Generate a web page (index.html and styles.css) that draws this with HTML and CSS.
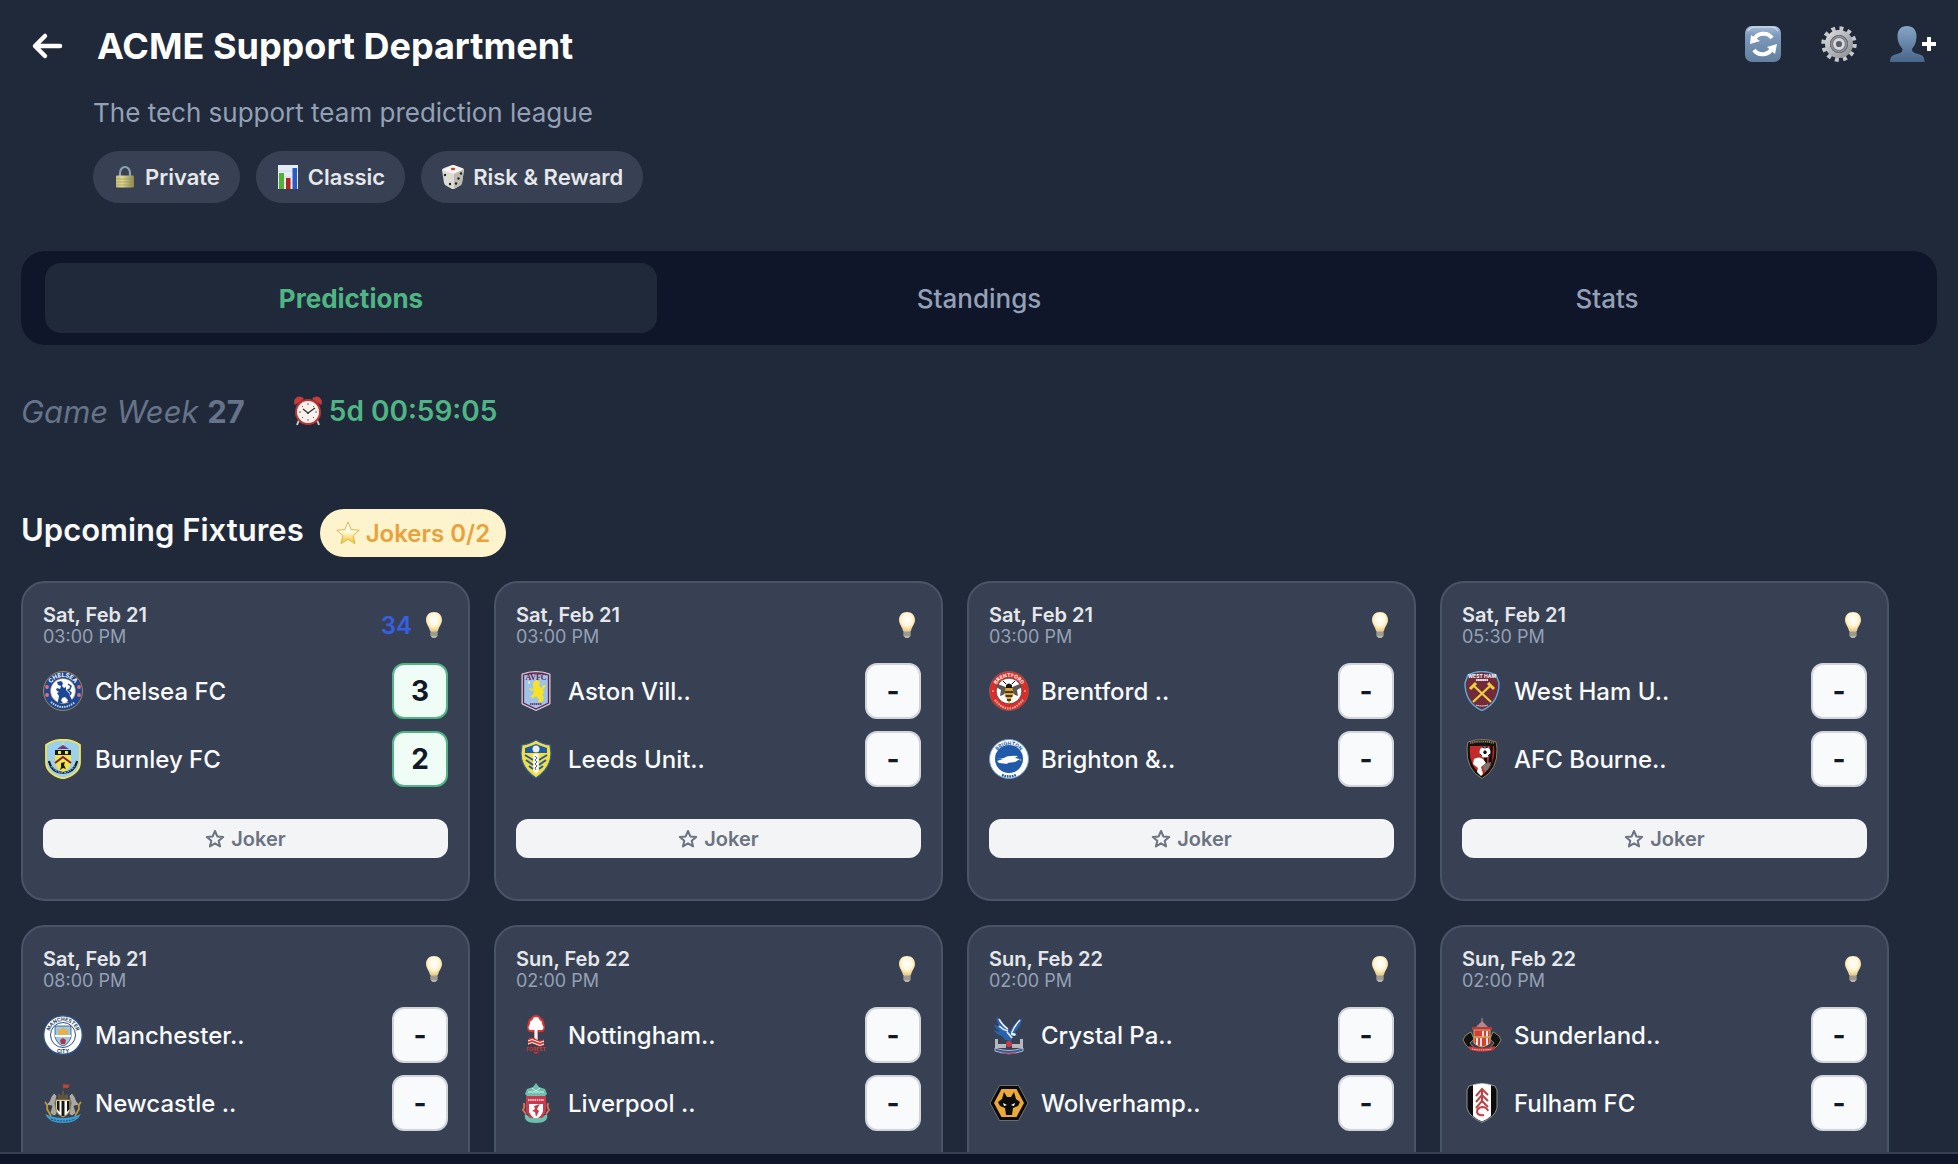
FILE: index.html
```html
<!DOCTYPE html>
<html lang="en">
<head>
    <meta charset="UTF-8">
    <meta name="viewport" content="width=device-width, initial-scale=1.0">
    <title>ACME Support Department</title>
    <link rel="stylesheet" href="styles.css">
</head>
<body>
    <!-- Shared icons, gradients and lettering arcs -->
    <svg class="sprite" aria-hidden="true">
        <defs>
            <linearGradient id="g-blue" x1="0" y1="0" x2="0" y2="1"><stop offset="0" stop-color="#a9c0dc"/><stop offset=".25" stop-color="#7e9abc"/><stop offset="1" stop-color="#64809f"/></linearGradient>
            <linearGradient id="g-person" x1="0" y1="0" x2="0" y2="1"><stop offset="0" stop-color="#86a5c6"/><stop offset="1" stop-color="#48658a"/></linearGradient>
            <linearGradient id="g-steel" x1="0" y1="0" x2="1" y2="1"><stop offset="0" stop-color="#d7d9dc"/><stop offset="1" stop-color="#8e9297"/></linearGradient>
            <linearGradient id="g-brass" x1="0" y1="0" x2="1" y2="0"><stop offset="0" stop-color="#c9c07a"/><stop offset=".35" stop-color="#ddd68f"/><stop offset="1" stop-color="#8f8750"/></linearGradient>
            <linearGradient id="g-star" x1="0" y1="0" x2="0" y2="1"><stop offset="0" stop-color="#fff"/><stop offset=".45" stop-color="#fffbe0"/><stop offset="1" stop-color="#f3c11f"/></linearGradient>
            <radialGradient id="g-bulb" cx=".5" cy=".4" r=".6"><stop offset="0" stop-color="#fff"/><stop offset=".55" stop-color="#fff7da"/><stop offset="1" stop-color="#eccb7c"/></radialGradient>
            <path id="arc-top" d="M6 20a14 14 0 0 1 28 0"/>
        </defs>

        <symbol id="i-bulb" viewBox="0 0 28 28">
            <path d="M14 0c5 0 8 3.500 8 8 0 4-3 6-4 11h-8C9 14 6 12 6 8c0-4.500 3-8 8-8z" fill="url(#g-bulb)"/>
            <path d="M10.500 19h7v5l-2 2h-3l-2-2z" fill="#b9b6ae"/><path d="M10.500 21h7M10.500 23h7" stroke="#837f76"/>
        </symbol>
        <symbol id="i-joker" viewBox="0 0 20 20">
            <path d="m10 2 2.300 5.400 5.900.500-4.500 3.800 1.400 5.700-5.100-3.100-5.100 3.100 1.400-5.700L1.800 7.900l5.900-.500z" fill="none" stroke="currentColor" stroke-width="2" stroke-linejoin="round"/>
        </symbol>
    </svg>

    <main class="page">
        <header class="league-header">
            <button type="button" class="icon-btn back" aria-label="Back">
                <svg width="32" height="32" viewBox="0 0 32 32"><path d="M14 6 4 16l10 10M4.500 16H29" fill="none" stroke="#fff" stroke-width="4.500" stroke-linecap="round" stroke-linejoin="round"/></svg>
            </button>
            <h1>ACME Support Department</h1>
            <div class="actions">
                <button type="button" class="icon-btn" aria-label="Refresh">
                    <svg width="40" height="36" viewBox="0 0 40 36">
                        <rect width="36" height="36" rx="7" fill="url(#g-blue)"/><path d="M3 5q2-4 7-4h16q5 0 7 4" fill="none" stroke="#d3e0ee" stroke-width="1.200"/>
                        <path d="M9 14a10 9 0 0 1 18-2M27 22a10 9 0 0 1-18 2" fill="none" stroke="#fff" stroke-width="4"/><path d="m5 18 1-9 9 6zM32 18l-10 3 8 7z" fill="#fff"/>
                    </svg>
                </button>
                <button type="button" class="icon-btn" aria-label="Settings">
                    <svg width="40" height="36" viewBox="0 0 40 36">
                        <circle cx="22" cy="18" r="15.500" fill="none" stroke="#c5c7ca" stroke-width="4.500" stroke-dasharray="3.900 4.216"/>
                        <circle cx="22" cy="18" r="11.500" fill="none" stroke="url(#g-steel)" stroke-width="5"/><circle cx="22" cy="18" r="9" fill="#777a80"/><circle cx="22" cy="18" r="7.500" fill="none" stroke="#94979c"/>
                        <circle cx="22" cy="18" r="4.500" fill="#5b5e66" stroke="#d7d8da" stroke-width="2.800"/>
                    </svg>
                </button>
                <button type="button" class="icon-btn" aria-label="Invite member">
                    <svg width="48" height="36" viewBox="0 0 48 36">
                        <path d="M18 0c6 0 9.500 4 9.500 10 0 6-2 10-4.500 13 0 3 2 4 6 5 5 1 6.500 3 6.500 8H1c0-5 2-7 7-8 4-1 5.500-2 5.500-5C11 20 8.500 16 8.500 10 8.500 4 12 0 18 0z" fill="url(#g-person)"/>
                        <path d="M40 11v14M33 18h14" stroke="#fff" stroke-width="4"/>
                    </svg>
                </button>
            </div>
        </header>
        <div class="league-info">
            <p>The tech support team prediction league</p>
            <div class="chips">
                <span class="chip">
                    <svg class="chip-icon" viewBox="0 0 24 24">
                        <path d="M7 12V8a5 6 0 0 1 10 0v4" fill="none" stroke="#8c9fb4" stroke-width="2.200"/>
                        <rect x="3" y="10.500" width="18" height="12" rx="1" fill="url(#g-brass)"/>
                        <path d="M3 14h18M3 17h18M3 20h18" stroke="#8f8750" stroke-width=".5"/>
                    </svg>Private
                </span>
                <span class="chip">
                    <svg class="chip-icon" viewBox="0 0 24 24">
                        <path d="M2 0h20v24H2z" fill="#e6ecf5"/>
                        <path d="M2 6h20M2 12h20M2 18h20" stroke="#c6d2e4" stroke-width=".8"/>
                        <path d="M3 8h5v16H3z" fill="#55b03a"/><path d="M10 13h4.500v11H10z" fill="#b3241c"/><path d="M16.500 3H21v21h-4.500z" fill="#2a5bc4"/>
                    </svg>Classic
                </span>
                <span class="chip">
                    <svg class="chip-icon" viewBox="0 0 24 24">
                        <path d="M1 5q0-1 2-2l8-3h2l8 3q2 1 2 2l-2 13-1 2-7 4h-2l-7-4-1-2z" fill="#dedbd4"/>
                        <path d="m1 5 11-5 11 4-10 5z" fill="#f7f5f1"/><path d="m13 9 10-5-2 14-1 2-7 4z" fill="#bdbab3"/>
                        <ellipse cx="12" cy="4" rx="2.200" ry="1.200" fill="#d8382c"/>
                        <g fill="#26221f"><circle cx="4" cy="10" r="1.200"/><circle cx="9" cy="19" r="1.200"/><circle cx="20" cy="8.500" r="1.200"/><circle cx="17.500" cy="13.500" r="1.200"/><circle cx="15" cy="18.500" r="1.200"/></g>
                    </svg>Risk &amp; Reward
                </span>
            </div>
        </div>

        <nav class="tabs">
            <button type="button" class="tab active">Predictions</button>
            <button type="button" class="tab">Standings</button>
            <button type="button" class="tab">Stats</button>
        </nav>

        <div class="game-week">
            <div class="week"><em>Game Week</em> <strong>27</strong></div>
            <div class="countdown">
                <svg class="clock" viewBox="0 0 30 30">
                    <path d="m6 24-2 5M24 24l2 5" stroke="#c9c9cd" stroke-width="2"/>
                    <path d="M2 9a5 5 0 0 1 9-6zM28 9a5 5 0 0 0-9-6z" fill="#c63c3c"/>
                    <circle cx="15" cy="16" r="13" fill="#bd3535"/><circle cx="15" cy="16" r="11" fill="#f6f3ee"/>
                    <path d="M15 7v2M15 23v2M6 16h2M22 16h2M9 10l1 1M21 10l-1 1M9 22l1-1M21 22l-1-1" stroke="#c63c3c"/>
                    <path d="m10 13 5 4 7-5" fill="none" stroke="#333" stroke-width="1.300"/><circle cx="15" cy="17" r="1" fill="#333"/>
                </svg>5d 00:59:05
            </div>
        </div>

        <div class="section-title">
            <h2>Upcoming Fixtures</h2>
            <span class="jokers">
                <svg class="star" viewBox="0 0 24 24"><path d="m12 1 3.200 7.600 8.100.700-6.200 5.300 1.900 8L12 18.300 5 22.600l1.900-8L.700 9.300l8.100-.700z" fill="url(#g-star)" stroke="#dfb64a" stroke-width="1" stroke-linejoin="round"/></svg>Jokers 0/2
            </span>
        </div>

        <section class="fixtures">
            <article class="card">
                <div class="card-head">
                    <div><div class="date">Sat, Feb 21</div><div class="time">03:00 PM</div></div>
                    <div class="hint"><span class="points">34</span><svg class="bulb"><use href="#i-bulb"/></svg></div>
                </div>
                <div class="team">
                    <svg class="crest" viewBox="0 0 40 40">
                        <circle cx="20" cy="20" r="19.500" fill="#1d4795" stroke="#a08a4c"/>
                        <circle cx="20" cy="20" r="12.500" fill="#fff" stroke="#a08a4c" stroke-width=".6"/>
                        <g fill="#ee6a78"><circle cx="4" cy="16" r="1.900"/><circle cx="4" cy="24" r="1.900"/><circle cx="36" cy="16" r="1.900"/><circle cx="36" cy="24" r="1.900"/></g>
                        <path d="m14 11 4-1 2 2-1 3 2 2 2-1v3l3 3 1 3 2 4-1 2h-4l1-2-3-3-3 1-1 3 2 1-1 1h-4v-2l1-5-2-3 2-1-3-2 1-2 3 1 1-3-3-1z" fill="#1d4795"/>
                        <path d="M25 13l3 2-1 3-2 1 3 3-1 2" fill="none" stroke="#1d4795" stroke-width="1.500"/>
                        <text class="crest-text" fill="#fff"><textPath href="#arc-top" startOffset="50%">CHELSEA</textPath></text>
                        <path d="M8 31q12 10 24 0" fill="none" stroke="#dfe6f2" stroke-width="1.800" stroke-dasharray="1.400 1"/>
                    </svg>
                    <label for="s1">Chelsea FC</label><input class="score filled" id="s1" type="text" value="3">
                </div>
                <div class="team">
                    <svg class="crest" viewBox="0 0 40 40">
                        <path d="M3 6Q12 0 20 1 28 0 37 6v17q0 12-17 16.500Q3 35 3 23z" fill="#9cd0ee" stroke="#efe455" stroke-width="1.800"/>
                        <path d="M12 11h16v11q0 8-8 11-8-3-8-11z" fill="#f1e548"/>
                        <path d="M12 11h16v5H12z" fill="#17181a"/><path d="M15 12h3v3h-3zM22 12h3v3h-3z" fill="#f1e548"/>
                        <path d="m12 24 8-6 8 6" fill="none" stroke="#7d1f3e" stroke-width="2"/>
                        <path d="M14 10h12l-3-2-3-2-3 2z" fill="#6c3d7c"/><path d="m20 2 1 4h-2z" fill="#efe455"/>
                        <path d="m18 24 4-1-1 3 2 4-3-1-3 2 1-3z" fill="#17181a"/>
                        <path d="M6 22q2 11 14 12 12-1 14-12" fill="none" stroke="#17181a" stroke-width="2.200"/><path d="M8 27q4 6 12 7 8-1 12-7" fill="none" stroke="#9cd0ee" stroke-dasharray="2 1"/>
                    </svg>
                    <label for="s2">Burnley FC</label><input class="score filled" id="s2" type="text" value="2">
                </div>
                <button type="button" class="joker"><svg class="joker-star"><use href="#i-joker"/></svg>Joker</button>
            </article>

            <article class="card">
                <div class="card-head">
                    <div><div class="date">Sat, Feb 21</div><div class="time">03:00 PM</div></div>
                    <div class="hint"><svg class="bulb"><use href="#i-bulb"/></svg></div>
                </div>
                <div class="team">
                    <svg class="crest" viewBox="0 0 40 40">
                        <path d="M6 3q14-5 28 0v30q-6 3-14 6.500Q12 36 6 33z" fill="#9fc3e8" stroke="#d9ccd9"/>
                        <path d="M7.500 4q12.500-4 25 0v28q-6 3-12.500 6-6.500-3-12.500-6z" fill="none" stroke="#6c1f45" stroke-width="1.300"/>
                        <text class="crest-text serif" x="20" y="9" fill="#6c1f45">AVFC</text>
                        <path d="m17 11 4-2 3 2-1 4 2 2 3-3 2 1-3 3 1 4-2 1 2 4-2 4h-4l1-3-3-3-3 2-3-1 3-3 1-3-4-1-1-2 5 1-1-3z" fill="#f7e224"/>
                        <circle cx="13" cy="11.500" r="1" fill="#fff"/><path d="M14 33h12" stroke="#6c1f45" stroke-width="1.600" stroke-dasharray="1.500 .5"/>
                    </svg>
                    <label for="s3">Aston Vill..</label><input class="score" id="s3" type="text" value="-">
                </div>
                <div class="team">
                    <svg class="crest" viewBox="0 0 40 40">
                        <path d="M20 1q6 4 14 5l1 8q0 15-15 25Q5 29 5 14l1-8q8-1 14-5z" fill="#f8de3b" stroke="#2a62a8" stroke-width="1.200"/>
                        <path d="M20 5q5 2 11 4v5H9V9q6-2 11-4z" fill="#1f5ca8"/>
                        <path d="m9 16 8 5M10 21l7 5M13 27l4 3M31 16l-8 5M30 21l-7 5M27 27l-4 3" stroke="#1f5ca8" stroke-width="2"/>
                        <circle cx="20" cy="10" r="3.500" fill="#e9eef2"/><path d="M17.500 15h5v17l-2.500 3-2.500-3z" fill="#fff"/><path d="m19 17 2 2-2 2 2 2-2 2 2 2-2 2 1 2" fill="none" stroke="#1f5ca8" stroke-width=".9"/>
                    </svg>
                    <label for="s4">Leeds Unit..</label><input class="score" id="s4" type="text" value="-">
                </div>
                <button type="button" class="joker"><svg class="joker-star"><use href="#i-joker"/></svg>Joker</button>
            </article>

            <article class="card">
                <div class="card-head">
                    <div><div class="date">Sat, Feb 21</div><div class="time">03:00 PM</div></div>
                    <div class="hint"><svg class="bulb"><use href="#i-bulb"/></svg></div>
                </div>
                <div class="team">
                    <svg class="crest" viewBox="0 0 40 40">
                        <circle cx="20" cy="20" r="19.500" fill="#dc2e28" stroke="#8b5552"/><circle cx="20" cy="20" r="12.800" fill="#fff" stroke="#222" stroke-width=".6"/>
                        <path d="m19 17-10-4-2 3 5 3-1 6 3-1 5-4zM21 17l10-4 2 3-5 3 1 6-3-1-5-4z" fill="#5c5751"/>
                        <path d="M17 14q3-3 6 0v3h-6z" fill="#191614"/><path d="M16.500 17h7l1 6-4.500 10-4.500-10z" fill="#dda63a"/><path d="M16 21h8M16.500 25h7M18 29h4" stroke="#191614" stroke-width="1.700"/><path d="m17 13-3-3M23 13l3-3" stroke="#191614"/>
                        <text class="crest-text tiny" fill="#fff"><textPath href="#arc-top" startOffset="50%">BRENTFORD</textPath></text>
                        <path d="M6 29q14 17 28 0" fill="none" stroke="#f6c3c0" stroke-width="2" stroke-dasharray="1.400 1.100"/><path d="M3 20h2M35 20h2" stroke="#f6c3c0"/>
                    </svg>
                    <label for="s5">Brentford ..</label><input class="score" id="s5" type="text" value="-">
                </div>
                <div class="team">
                    <svg class="crest" viewBox="0 0 40 40">
                        <circle cx="20" cy="20" r="19.500" fill="#fff" stroke="#6c9ed2"/><circle cx="20" cy="20" r="14" fill="#215aa9"/>
                        <path d="M1 19q10 1 14 0 4-3 14-2l-3 2 5 1-5 3-8 1 1 1-9-1-2-2 6-2-13-1z" fill="#fff"/><path d="m31 20 2 1-2 1z" fill="#e9b93b"/>
                        <text class="crest-text tiny" fill="#215aa9"><textPath href="#arc-top" startOffset="50%">BRIGHTON</textPath></text>
                        <path d="M13 36q7 3 14 0" fill="none" stroke="#215aa9" stroke-width="2.500" stroke-dasharray="1.700 .8"/>
                    </svg>
                    <label for="s6">Brighton &amp;..</label><input class="score" id="s6" type="text" value="-">
                </div>
                <button type="button" class="joker"><svg class="joker-star"><use href="#i-joker"/></svg>Joker</button>
            </article>

            <article class="card">
                <div class="card-head">
                    <div><div class="date">Sat, Feb 21</div><div class="time">05:30 PM</div></div>
                    <div class="hint"><svg class="bulb"><use href="#i-bulb"/></svg></div>
                </div>
                <div class="team">
                    <svg class="crest" viewBox="0 0 40 40">
                        <path d="M6 4q14-7 28 0l3 8q0 20-17 27.500Q3 32 3 12z" fill="#722b3a" stroke="#59a7d8" stroke-width="1.500"/>
                        <text class="crest-text tiny" x="20" y="7" fill="#fff">WEST HAM</text>
                        <path d="M14 9h12" stroke="#fff" stroke-width="2" stroke-dasharray="1.600 .5"/>
                        <path d="m11 31 18-17M29 31 11 14" stroke="#f1cf3d" stroke-width="2.200"/><path d="m8 18 6-6M26 12l6 6" stroke="#f1cf3d" stroke-width="3"/>
                        <path d="M14 34q6 2 12 0" fill="none" stroke="#fff" stroke-dasharray="1.500 .6"/>
                    </svg>
                    <label for="s7">West Ham U..</label><input class="score" id="s7" type="text" value="-">
                </div>
                <div class="team">
                    <svg class="crest" viewBox="0 0 40 40">
                        <path d="M6 3q14-5 28 0l1 6q1 22-15 30.500Q4 31 5 9z" fill="#17110f" stroke="#8a7d62"/>
                        <path d="M8 7h24q2 20-12 29Q6 27 8 7z" fill="#c42a29"/><path d="M22 7h3v25h-3zM28 7h3l-1 17-4 6z" fill="#17110f"/>
                        <path d="M8 4q12-3 24 0" fill="none" stroke="#8a7d62" stroke-width="1.800" stroke-dasharray="1.500 .6"/>
                        <circle cx="23" cy="13" r="5.500" fill="#fff"/><path d="m23 11 2 2-1 2h-2l-1-2z" fill="#17110f"/><path d="m20 8 3 1 3-1M18 15l2 2M28 15l-2 2" fill="none" stroke="#17110f"/>
                        <path d="M12 20q5-3 9 0l3 4-5 4 2 7-2 2-4-4 1-4-5-4z" fill="#fff"/><path d="m22 25 7-2q-1 6-6 10l-2-4z" fill="#7a7672"/>
                    </svg>
                    <label for="s8">AFC Bourne..</label><input class="score" id="s8" type="text" value="-">
                </div>
                <button type="button" class="joker"><svg class="joker-star"><use href="#i-joker"/></svg>Joker</button>
            </article>

            <article class="card">
                <div class="card-head">
                    <div><div class="date">Sat, Feb 21</div><div class="time">08:00 PM</div></div>
                    <div class="hint"><svg class="bulb"><use href="#i-bulb"/></svg></div>
                </div>
                <div class="team">
                    <svg class="crest" viewBox="0 0 40 40">
                        <circle cx="20" cy="20" r="19.300" fill="#fff" stroke="#2b5286" stroke-width="1.400"/><circle cx="20" cy="20" r="12.500" fill="#fff" stroke="#2b5286"/>
                        <path d="M12 11h16v11q-2 7-8 9-6-2-8-9z" fill="#9fc7e8" stroke="#2b5286" stroke-width=".8"/>
                        <path d="m15 14 2 1 3-3 3 3 2-1v6H15z" fill="#e2b34b"/><path d="M12 20h16v2H12z" fill="#fff"/><path d="m20 23 3 2-1 4h-4l-1-4z" fill="#ad3647"/>
                        <text class="crest-text tiny" fill="#2b3c62"><textPath href="#arc-top" startOffset="50%">MANCHESTER</textPath></text>
                        <text class="crest-text tiny" x="20" y="38" fill="#2b3c62">CITY</text>
                    </svg>
                    <label for="s9">Manchester..</label><input class="score" id="s9" type="text" value="-">
                </div>
                <div class="team">
                    <svg class="crest" viewBox="0 0 40 40">
                        <path d="M20 8V1l7 1-2 3h-5" fill="#c94141" stroke="#5c5148" stroke-width=".6"/><path d="M15 16v-5h2v1h2V8h2v4h2v-1h2v5z" fill="#5f5540"/>
                        <path d="M3 22q4-3 5-8l3-4 3 3-2 7 2 11-3 2-4-3 2-7zM37 22q-4-3-5-8l-3-4-3 3 2 7-2 11 3 2 4-3-2-7z" fill="#a9aaa8" stroke="#3b3a3a" stroke-width=".8"/>
                        <path d="M2 19q3 3 2 7l4 7M38 19q-3 3-2 7l-4 7" fill="none" stroke="#b89538" stroke-width="1.800"/>
                        <path d="M13 17h14v8q0 6-7 9-7-3-7-9z" fill="#fff" stroke="#b89538"/><path d="M14 18h2.500v11L14 26zM18.500 18h3v15h-3zM24 18h2.500v8L24 29z" fill="#161616"/>
                        <path d="M2 31q18 8 36 0-4 9-18 9T2 31z" fill="#3d9bd1"/><path d="M8 36q12 4 24 0" fill="none" stroke="#1f4c70" stroke-dasharray="2 1"/>
                    </svg>
                    <label for="s10">Newcastle ..</label><input class="score" id="s10" type="text" value="-">
                </div>
            </article>

            <article class="card">
                <div class="card-head">
                    <div><div class="date">Sun, Feb 22</div><div class="time">02:00 PM</div></div>
                    <div class="hint"><svg class="bulb"><use href="#i-bulb"/></svg></div>
                </div>
                <div class="team">
                    <svg class="crest" viewBox="0 0 40 40">
                        <path d="M20 0q4 0 5 3 3 1 3 5 2 4 0 8-3 2-6 1v8h-4v-8q-3 1-6-1-2-4 0-8 0-4 3-5 1-3 5-3z" fill="#d9342f"/>
                        <path d="M20 2q3 0 3.500 3 3 1 2.500 4 3 4 0 6h-4.500v10h-3V15H14q-3-2 0-6-.500-3 2.500-4Q17 2 20 2z" fill="#fff"/>
                        <path d="M12 24q4-3 8 0t8 0v6q-4 3-8 0t-8 0z" fill="#d9342f"/><path d="M12 26q4-3 8 0t8 0M12 29q4-3 8 0t8 0" fill="none" stroke="#fff"/>
                        <text class="crest-text tiny" x="20" y="36" fill="#d9342f">FOREST</text><path d="M17 37h6l-3 2z" fill="#d9342f"/>
                    </svg>
                    <label for="s11">Nottingham..</label><input class="score" id="s11" type="text" value="-">
                </div>
                <div class="team">
                    <svg class="crest" viewBox="0 0 40 40">
                        <path d="m20 0 3 4 6 2 2 5-2 2H11l-2-2 2-5 6-2z" fill="#6fbfae"/><path d="M12 9h16M16 5l4 3 4-3" fill="none" stroke="#d7eee9"/>
                        <path d="M10 13h20v15l-4 7H14l-4-7z" fill="#c93a4c"/><path d="M8 20q1 4-1 7l3 4M32 20q-1 4 1 7l-3 4" fill="none" stroke="#dc6c4c" stroke-width="2"/>
                        <path d="M13 21h14v7q-1 5-7 8-6-3-7-8z" fill="#fff"/><path d="m18 23 6-2-3 5 2 2-3 6-1-5-3-1 3-2z" fill="#c93a4c"/><path d="M12 17h16" stroke="#f4c9cd" stroke-width="2" stroke-dasharray="1.400 .8"/>
                        <path d="M9 31q3 1 5 4h12q2-3 5-4 2 9-11 9T9 31z" fill="#6fbfae"/>
                    </svg>
                    <label for="s12">Liverpool ..</label><input class="score" id="s12" type="text" value="-">
                </div>
            </article>

            <article class="card">
                <div class="card-head">
                    <div><div class="date">Sun, Feb 22</div><div class="time">02:00 PM</div></div>
                    <div class="hint"><svg class="bulb"><use href="#i-bulb"/></svg></div>
                </div>
                <div class="team">
                    <svg class="crest" viewBox="0 0 40 40">
                        <path d="M8 1q3 7 11 12l2 3q4-8 12-13-1 9-7 14l2 4-3-1-3 6-6-1-3-4q-6-1-8-6 4 2 6 1-6-3-6-7 3 3 5 2-3-5-2-10z" fill="#2a63ad"/>
                        <path d="M10 4q4 7 9 10M10 11q4 4 9 5M31 5q-5 5-8 12M18 17l5 6" fill="none" stroke="#e8eff7" stroke-width="1.600"/>
                        <path d="m22 17 5 2-1 2-4-1z" fill="#f2f4f6"/><circle cx="20" cy="29" r="3" fill="#c83b45"/>
                        <path d="M6 24h3v5h8v4H6zM34 24h-3v5h-8v4h11z" fill="#b6b8bd"/><path d="M6 33q14 5 28 0v3q-14 5-28 0z" fill="#34589b" stroke="#e3e6ee" stroke-width=".7"/><path d="M13 38q7 2 14 0" fill="none" stroke="#c83b45"/>
                    </svg>
                    <label for="s13">Crystal Pa..</label><input class="score" id="s13" type="text" value="-">
                </div>
                <div class="team">
                    <svg class="crest" viewBox="0 0 40 40">
                        <path d="M10.500 2.500h19L39 20l-9.500 17.500h-19L1 20z" fill="#0c0c0c" stroke="#8b8b8b" stroke-width=".7"/><path d="M12.500 6h15L35 20l-7.500 14h-15L5 20z" fill="#eba937"/>
                        <path d="m15 9 3 5h4l3-5 2 7 4 3-2 4-5 2-1 7h-6l-1-7-5-2-2-4 4-3z" fill="#0c0c0c"/><path d="m14 20 4 2-3 1zM26 20l-4 2 3 1z" fill="#fff"/>
                    </svg>
                    <label for="s14">Wolverhamp..</label><input class="score" id="s14" type="text" value="-">
                </div>
            </article>

            <article class="card">
                <div class="card-head">
                    <div><div class="date">Sun, Feb 22</div><div class="time">02:00 PM</div></div>
                    <div class="hint"><svg class="bulb"><use href="#i-bulb"/></svg></div>
                </div>
                <div class="team">
                    <svg class="crest" viewBox="0 0 40 40">
                        <path d="M20 3v6" stroke="#9a9dab"/><path d="m20 6 7 7H13z" fill="#b8848c"/><path d="M10 12h20v3H10z" fill="#b93a3e"/>
                        <path d="m9 17-2 1-4 3-2 4 3 5 3 3h5l-4-5 4-4zM31 17l2 1 4 3 2 4-3 5-3 3h-5l4-5-4-4z" fill="#131313" stroke="#a7996f" stroke-width=".8"/>
                        <path d="M12 15h16v13q-3 3-8 4-5-1-8-4z" fill="#d93c37" stroke="#cfae58"/><path d="M21 16v6M25 16v6M15 23v7M19 23v8M25 23v7" stroke="#fff" stroke-width="1.700"/><path d="M12 22h16" stroke="#cfae58" stroke-width="1.500"/>
                        <path d="M7 31q13 4 26 0l-1 4q-12 3-24 0z" fill="#cf3838"/><path d="M10 34q10 2 20 0" fill="none" stroke="#f2c6c6" stroke-dasharray="1.500 .7"/>
                    </svg>
                    <label for="s15">Sunderland..</label><input class="score" id="s15" type="text" value="-">
                </div>
                <div class="team">
                    <svg class="crest" viewBox="0 0 40 40">
                        <path d="M7 3q13-5 26 0l2 4v18q-2 9-15 14.500Q7 34 5 25V7z" fill="#0d0d0d" stroke="#8d9095"/>
                        <path d="M11 2q9-3 18 0v31q-3 3-9 5.500-6-2.500-9-5.500z" fill="#fff"/>
                        <g fill="none" stroke="#bf4244" stroke-width="2"><path d="m14 13 6-7 6 6"/><path d="m14 19 6-7 6 6"/><path d="m14 25 6-7 6 6"/><path d="M26 28q-1-4-6-4-5 1-5 5 1 4 7 3"/><path d="M20 6v14"/></g>
                    </svg>
                    <label for="s16">Fulham FC</label><input class="score" id="s16" type="text" value="-">
                </div>
            </article>
        </section>
    </main>
    <footer class="bottom-bar"></footer>
</body>
</html>
```

FILE: styles.css
```css
*, *::after, *::before {
    box-sizing: border-box;
}

body {
    font-family: Inter, 'Noto Sans', sans-serif;
    margin: 0;
    height: 100vh;
    display: flex;
    flex-direction: column;
    overflow: hidden;
    background-color: #202939;
    color: #f9fafb;
}

h1, h2, p {
    margin: 0;
}

button, input {
    font-family: inherit;
}

svg {
    display: block;
    flex: none;
}

.sprite {
    position: absolute;
    width: 0;
    height: 0;
}

.page {
    flex: 1;
    min-height: 0;
    overflow: hidden;
    padding: 24px 21px 0;
}

/* Header */
.league-header {
    display: flex;
    align-items: center;
    height: 44px;
}

.icon-btn {
    padding: 0;
    border: none;
    background: none;
    cursor: pointer;
}

.back {
    margin: 0 34px 0 10px;
}

h1 {
    font-size: 36px;
    line-height: 44px;
    font-weight: 700;
    color: #fff;
}

.actions {
    display: flex;
    gap: 32px;
    margin-left: auto;
    padding-bottom: 4px;
}

.league-info {
    padding: 29px 0 0 72px;
}

.league-info p {
    font-size: 26px;
    line-height: 32px;
    color: #94a0b5;
}

.chips {
    display: flex;
    gap: 16px;
    margin-top: 22px;
}

.chip {
    display: flex;
    align-items: center;
    gap: 8px;
    height: 52px;
    padding: 0 20px;
    border-radius: 26px;
    background-color: #374153;
    color: #e5e7eb;
    font-size: 22px;
    font-weight: 600;
}

.chip-icon {
    width: 24px;
    height: 24px;
}

/* Tabs */
.tabs {
    display: flex;
    gap: 16px;
    margin-top: 48px;
    padding: 12px 24px;
    border-radius: 24px;
    background-color: #0f1629;
}

.tab {
    flex: 1;
    height: 70px;
    border: none;
    border-radius: 16px;
    background: none;
    color: #94a0b5;
    font-size: 26px;
    font-weight: 500;
    cursor: pointer;
}

.tab.active {
    background-color: #202939;
    color: #50b584;
    font-weight: 700;
}

/* Game week and countdown */
.game-week {
    display: flex;
    gap: 48px;
    margin-top: 46px;
}

.week {
    font-size: 31px;
    line-height: 42px;
    color: #667389;
}

.week strong {
    font-weight: 700;
}

.countdown {
    display: flex;
    align-items: center;
    gap: 6px;
    height: 40px;
    font-size: 28px;
    font-weight: 600;
    color: #50b584;
}

.clock {
    width: 30px;
    height: 30px;
}

.section-title {
    display: flex;
    gap: 16px;
    margin-top: 76px;
}

h2 {
    font-size: 31px;
    line-height: 42px;
    font-weight: 600;
}

.jokers {
    display: flex;
    align-items: center;
    gap: 6px;
    height: 48px;
    padding: 0 16px;
    border-radius: 24px;
    background-color: #fdf3cd;
    color: #e9a23b;
    font-size: 24px;
    font-weight: 600;
}

.star {
    width: 24px;
    height: 24px;
}

/* Fixture cards */
.fixtures {
    display: grid;
    grid-template-columns: repeat(4, 1fr);
    gap: 24px;
    margin-top: 24px;
    padding-right: 48px;
}

.card {
    min-height: 320px;
    padding: 21px 20px 41px;
    border: 2px solid #495567;
    border-radius: 24px;
    background-color: #374153;
}

.card-head {
    display: flex;
    justify-content: space-between;
    align-items: center;
    margin-bottom: 15px;
}

.date {
    font-size: 20px;
    line-height: 22px;
    font-weight: 600;
    color: #e5e7eb;
}

.time {
    font-size: 18px;
    line-height: 22px;
    color: #94a0b5;
}

.hint {
    display: flex;
    align-items: center;
    gap: 8px;
}

.points {
    font-size: 24px;
    line-height: 28px;
    font-weight: 600;
    color: #385fe3;
}

.bulb {
    width: 28px;
    height: 28px;
}

.team {
    display: flex;
    align-items: center;
    gap: 12px;
    margin-bottom: 12px;
    font-size: 24px;
    font-weight: 500;
}

.team label {
    flex: 1;
}

.crest {
    width: 40px;
    height: 40px;
}

.crest-text {
    font-size: 6px;
    font-weight: 700;
    text-anchor: middle;
}

.crest-text.tiny {
    font-size: 5px;
}

.crest-text.serif {
    font-family: 'Liberation Serif', serif;
    font-size: 8px;
}

.score {
    width: 56px;
    height: 56px;
    padding: 0;
    border: 2px solid #d1d5db;
    border-radius: 12px;
    background-color: #f9fafb;
    color: #111827;
    font-size: 28px;
    font-weight: 700;
    text-align: center;
}

.score.filled {
    border-color: #50b584;
    background-color: #f0fdf6;
}

.joker {
    display: flex;
    justify-content: center;
    align-items: center;
    gap: 6px;
    width: 100%;
    height: 39px;
    margin-top: 32px;
    padding: 0;
    border: none;
    border-radius: 12px;
    background-color: #f3f4f6;
    color: #6b7280;
    font-size: 20px;
    font-weight: 600;
    cursor: pointer;
}

.joker-star {
    width: 20px;
    height: 20px;
}

.bottom-bar {
    flex: none;
    height: 12px;
    border-top: 2px solid #374153;
    background-color: #0f1629;
}
```
